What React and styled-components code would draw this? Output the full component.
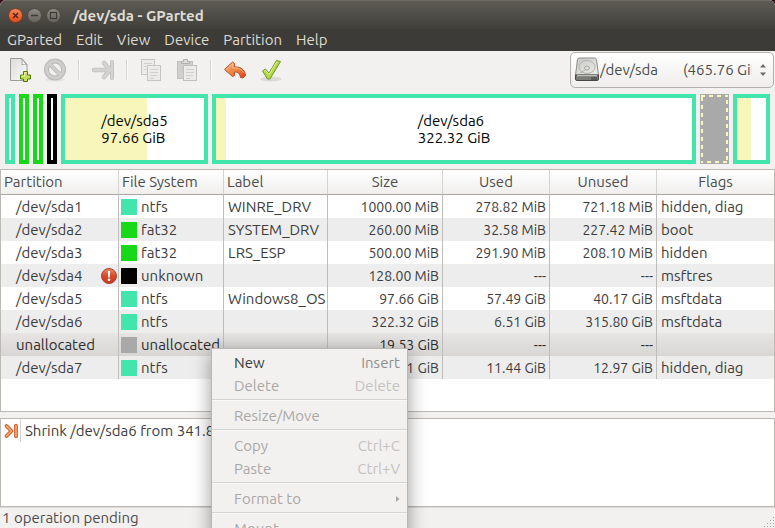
import React from "react";
import styled, { createGlobalStyle } from "styled-components";

const GlobalStyle = createGlobalStyle`
  * {
    box-sizing: border-box;
  }
  body {
    margin: 0;
    background: #300a18;
    color: #3c3c3c;
    font-family: Ubuntu, "Noto Sans", sans-serif;
    font-size: 15px;
  }
  button, select {
    font: inherit;
    color: inherit;
    border: none;
    background: none;
    margin: 0;
    padding: 0;
  }
`;

const colors = {
  ntfs: "#42e5ac",
  fat32: "#18d918",
  unknown: "#000000",
  unallocated: "#a9a9a9",
  used: "#f8f6ba",
};

const Window = styled.div`
  position: relative;
  display: flex;
  flex-direction: column;
  height: 100vh;
  overflow: hidden;
  background: #f2f1f0;
  border-radius: 6px 6px 0 0;
`;

const TitleBar = styled.header`
  display: flex;
  align-items: center;
  gap: 4px;
  height: 29px;
  flex-shrink: 0;
  padding: 0 8px;
  background: linear-gradient(#5d5b54, #403f3a);
  border-top: 1px solid #6b6961;
`;

const Title = styled.h1`
  margin: 0 0 0 8px;
  font-size: 15px;
  font-weight: 700;
  color: #dfdbd2;
`;

const WindowButton = styled.button`
  display: flex;
  width: 15px;
  height: 15px;
`;

const MenuBar = styled.nav`
  display: flex;
  gap: 14px;
  height: 22px;
  flex-shrink: 0;
  padding: 0 7px 2px;
  background: #3c3b37;
  color: #dfdbd2;
`;

const Toolbar = styled.div`
  display: flex;
  align-items: center;
  height: 38px;
  flex-shrink: 0;
  padding: 0 1px;
`;

const ToolButton = styled.button`
  display: flex;
  align-items: center;
  justify-content: center;
  width: 36px;
  height: 36px;
`;

const ToolSeparator = styled.span`
  width: 2px;
  height: 20px;
  margin: 0 5px;
  border-left: 1px solid #d6d4d2;
  background: #fbfbfa;
`;

const DeviceBox = styled.label`
  display: flex;
  align-items: center;
  width: 204px;
  height: 36px;
  margin-left: auto;
  padding: 0 6px 0 3px;
  border: 1px solid #b4b1ac;
  border-radius: 5px;
  background: linear-gradient(#ffffff, #eeedeb);
  color: #4c4c4c;
`;

const DeviceSelect = styled.select`
  flex: 1;
  min-width: 0;
  height: 22px;
  margin: 0 7px 2px 0;
  appearance: none;
  overflow: hidden;
  text-overflow: clip;
`;

const DiskMap = styled.div`
  display: flex;
  gap: 4px;
  height: 70px;
  flex-shrink: 0;
  margin: 5px;
`;

const Block = styled.div`
  flex: ${({ $size }) => `${$size} 1 ${$size}px`};
  min-width: 0;
  display: flex;
  align-items: center;
  justify-content: center;
  border: 4px solid ${({ $color }) => $color};
  background: linear-gradient(
    to right,
    ${colors.used} ${({ $used }) => $used}%,
    #ffffff ${({ $used }) => $used}%
  );
  background-origin: padding-box;
  color: #000000;
  line-height: 17px;
  white-space: pre-line;
`;

const FreeBlock = styled.div`
  flex: ${({ $size }) => `${$size} 1 ${$size}px`};
  padding: 1px;
  background: ${colors.unallocated};
`;

const Dashes = styled.svg`
  display: block;
  width: 100%;
  height: 100%;
`;

const Panel = styled.section`
  flex: ${({ $grow }) => ($grow ? 1 : "none")};
  min-height: ${({ $grow }) => ($grow ? "0" : "89px")};
  margin-bottom: ${({ $grow }) => ($grow ? "6px" : "0")};
  overflow: hidden;
  border: 1px solid #bdbab5;
  background: #ffffff;
`;

const Table = styled.table`
  width: 100%;
  table-layout: fixed;
  border-collapse: separate;
  border-spacing: 0;
  line-height: 20px;
`;

const HeadCell = styled.th`
  width: ${({ $width }) => $width};
  height: 25px;
  padding: 0 3px;
  text-align: ${({ $align }) => $align || "left"};
  font-weight: 400;
  color: #4c4c4c;
  background: linear-gradient(#ffffff, #f0efee);
  border-right: 1px solid #d6d4d2;
  border-bottom: 1px solid #a9a6a2;
  &:last-child {
    border-right: none;
  }
`;

const Row = styled.tr`
  background: ${({ $selected }) =>
    $selected ? "linear-gradient(#e6e5e4, #d8d6d4)" : "#ffffff"};
  color: ${({ $selected }) => ($selected ? "#2c2c2c" : "#3c3c3c")};
  &:nth-child(even) {
    background: #ededed;
  }
`;

const Cell = styled.td`
  height: 23px;
  padding: 0 3px 0 4px;
  white-space: nowrap;
  border-right: 1px solid #bfbdba;
  &:last-child {
    border-right: none;
  }
`;

const NumberCell = styled(Cell)`
  font-size: 14px;
  text-align: right;
`;

const NameLine = styled.div`
  display: flex;
  align-items: center;
  justify-content: space-between;
  height: 20px;
  padding-left: 11px;
  margin-right: -2px;
`;

const FsLine = styled.div`
  display: flex;
  align-items: center;
  gap: 4px;
  height: 20px;
  margin-left: -2px;
`;

const Swatch = styled.span`
  width: 16px;
  height: 16px;
  flex-shrink: 0;
  background: ${({ $color }) => $color};
`;

const Operation = styled.div`
  display: flex;
  align-items: center;
  height: 23px;
  white-space: nowrap;
`;

const OperationIcon = styled.span`
  display: flex;
  align-items: center;
  align-self: stretch;
  width: 20px;
  margin-right: 4px;
  padding-left: 2px;
  border-right: 1px solid #d6d4d2;
`;

const StatusBar = styled.footer`
  display: flex;
  align-items: flex-start;
  justify-content: space-between;
  height: 21px;
  flex-shrink: 0;
  padding-left: 2px;
  border-top: 1px solid #dcdad8;
  color: #4c4c4c;
  line-height: 20px;
`;

const Grip = styled.svg`
  align-self: flex-end;
`;

const ContextMenu = styled.div`
  position: absolute;
  left: 211px;
  top: 348px;
  width: 197px;
  padding: 2px 0;
  border: 1px solid #bab7b3;
  background: #f2f1f0;
  box-shadow: 0 5px 18px rgba(0, 0, 0, 0.4);
`;

const MenuItem = styled.button`
  display: flex;
  align-items: center;
  justify-content: space-between;
  width: 100%;
  height: 23px;
  padding: 0 7px 0 22px;
  color: #3c3c3c;
  &:disabled {
    color: #aaa8a5;
  }
`;

const Shortcut = styled.span`
  color: #8e8e8c;
  ${MenuItem}:disabled & {
    color: #c4c2bf;
  }
`;

const MenuLine = styled.hr`
  height: 2px;
  margin: 2px 0 3px;
  border: none;
  border-top: 1px solid #d6d4d2;
  background: #fafafa;
`;

const partitions = [
  { name: "/dev/sda1", fs: "ntfs", label: "WINRE_DRV", size: "1000.00 MiB", used: "278.82 MiB", unused: "721.18 MiB", flags: "hidden, diag" },
  { name: "/dev/sda2", fs: "fat32", label: "SYSTEM_DRV", size: "260.00 MiB", used: "32.58 MiB", unused: "227.42 MiB", flags: "boot" },
  { name: "/dev/sda3", fs: "fat32", label: "LRS_ESP", size: "500.00 MiB", used: "291.90 MiB", unused: "208.10 MiB", flags: "hidden" },
  { name: "/dev/sda4", fs: "unknown", label: "", size: "128.00 MiB", used: "---", unused: "---", flags: "msftres", warning: true },
  { name: "/dev/sda5", fs: "ntfs", label: "Windows8_OS", size: "97.66 GiB", used: "57.49 GiB", unused: "40.17 GiB", flags: "msftdata" },
  { name: "/dev/sda6", fs: "ntfs", label: "", size: "322.32 GiB", used: "6.51 GiB", unused: "315.80 GiB", flags: "msftdata" },
  { name: "unallocated", fs: "unallocated", label: "", size: "19.53 GiB", used: "---", unused: "---", flags: "", selected: true },
  { name: "/dev/sda7", fs: "ntfs", label: "", size: "24.41 GiB", used: "11.44 GiB", unused: "12.97 GiB", flags: "hidden, diag" },
];

const blocks = [
  { name: "sda1", size: 10, fs: "ntfs", used: 28 },
  { name: "sda2", size: 10, fs: "fat32", used: 13 },
  { name: "sda3", size: 10, fs: "fat32", used: 58 },
  { name: "sda4", size: 10, fs: "unknown", used: 0 },
  { name: "sda5", size: 147, fs: "ntfs", used: 59, text: "/dev/sda5\n97.66 GiB" },
  { name: "sda6", size: 484, fs: "ntfs", used: 2, text: "/dev/sda6\n322.32 GiB" },
  { name: "free", size: 29, free: true },
  { name: "sda7", size: 37, fs: "ntfs", used: 48 },
];

const columns = [
  { title: "Partition", width: "118px" },
  { title: "File System", width: "105px" },
  { title: "Label", width: "104px" },
  { title: "Size", width: "115px", align: "center" },
  { title: "Used", width: "107px", align: "center" },
  { title: "Unused", width: "107px", align: "center" },
  { title: "Flags", width: "auto", align: "center" },
];

const menuItems = [
  { text: "New", shortcut: "Insert", enabled: true },
  { text: "Delete", shortcut: "Delete" },
  null,
  { text: "Resize/Move" },
  null,
  { text: "Copy", shortcut: "Ctrl+C" },
  { text: "Paste", shortcut: "Ctrl+V" },
  null,
  { text: "Format to", submenu: true },
  null,
  { text: "Mount" },
];

function WindowIcon({ kind }) {
  const close = kind === "close";
  return (
    <svg width="15" height="15" viewBox="0 0 15 15" fill="none">
      <defs>
        <linearGradient id={`wb-${kind}`} x1="0" y1="0" x2="0" y2="1">
          <stop offset="0" stopColor={close ? "#f58a60" : "#8d8b84"} />
          <stop offset="1" stopColor={close ? "#df4a16" : "#65635c"} />
        </linearGradient>
      </defs>
      <circle cx="7.5" cy="7.5" r="7" fill={`url(#wb-${kind})`} stroke={close ? "#7e3a20" : "#4a4943"} />
      {close && <path d="M5 5l5 5M10 5l-5 5" stroke="#4b2010" strokeWidth="1.3" />}
      {kind === "minimize" && <path d="M4 7.5h7" stroke="#3c3b37" strokeWidth="1.3" />}
      {kind === "maximize" && <rect x="4.5" y="4.5" width="6" height="6" stroke="#3c3b37" strokeWidth="1.2" />}
    </svg>
  );
}

function NewIcon() {
  return (
    <svg width="24" height="24" viewBox="0 0 24 24" fill="none">
      <defs>
        <linearGradient id="page" x1="0" y1="0" x2="1" y2="1">
          <stop offset="0" stopColor="#dcdcda" />
          <stop offset="1" stopColor="#fafafa" />
        </linearGradient>
      </defs>
      <path d="M3.500.5h11.500l5 6v16h-16.500z" fill="url(#page)" stroke="#9b9b98" />
      <path d="M14.500.7c1 2 .8 4 .2 6 2-.5 3.500-.5 5 .2z" fill="#ffffff" stroke="#a8a8a5" />
      <path d="M16.500 13.500h4v3.500h3v4h-3v2.500h-4v-2.500h-3v-4h3z" fill="#c5de58" stroke="#4e7a08" />
      <path d="M17.500 14.500h2M14.500 18h3v-3" stroke="#e9f3ae" />
    </svg>
  );
}

function ForbiddenIcon() {
  return (
    <svg width="24" height="24" viewBox="0 0 24 24" fill="none">
      <ellipse cx="12" cy="21.500" rx="10" ry="2" fill="#e4e3e1" />
      <circle cx="12" cy="11.500" r="8.500" stroke="#b9b8b6" strokeWidth="5" />
      <path d="M6.500 6l11 11" stroke="#b9b8b6" strokeWidth="4" />
      <circle cx="12" cy="11.500" r="8.500" stroke="#cfcecc" strokeWidth="3" />
      <path d="M6 5.500l12 12" stroke="#cfcecc" strokeWidth="2.500" />
    </svg>
  );
}

function MoveIcon() {
  return (
    <svg width="24" height="24" viewBox="0 0 24 24" fill="none" strokeLinecap="round" strokeLinejoin="round">
      <g stroke="#c2c1bf" strokeWidth="4.500">
        <path d="M3 12h12M13 5l6 7-6 7" />
        <path d="M21 4v16" strokeWidth="4" />
      </g>
      <g stroke="#d4d3d1" strokeWidth="3">
        <path d="M3 12h12M13 5l6 7-6 7" />
        <path d="M21 4v16" strokeWidth="2.500" />
      </g>
    </svg>
  );
}

function CopyIcon() {
  return (
    <svg width="24" height="24" viewBox="0 0 24 24" fill="#ecebea" stroke="#c6c5c3">
      <rect x="2.500" y="1.500" width="13" height="15" />
      <path d="M5 5.500h8M5 8.500h8M5 11.500h4" stroke="#d2d1cf" />
      <rect x="8.500" y="7.500" width="13" height="15" />
      <path d="M11 11.500h8M11 14.500h8M11 17.500h7M11 20.500h4" stroke="#cfcecc" />
    </svg>
  );
}

function PasteIcon() {
  return (
    <svg width="24" height="24" viewBox="0 0 24 24" fill="#ecebea" stroke="#c0bfbd">
      <rect x="2.500" y="3.500" width="15" height="17" fill="#d0cfcd" />
      <path d="M6.500 5.500v-2h2v-2h4v2h2v2z" fill="#dddcda" stroke="#b0afad" />
      <rect x="8.500" y="7.500" width="13" height="15" />
      <path d="M11 11.500h8M11 14.500h8M11 17.500h7M11 20.500h4" stroke="#cfcecc" />
    </svg>
  );
}

function UndoIcon() {
  return (
    <svg width="24" height="24" viewBox="0 0 24 24" fill="none">
      <defs>
        <linearGradient id="undo" x1="0" y1="0" x2="1" y2="1">
          <stop offset="0" stopColor="#f8b878" />
          <stop offset=".6" stopColor="#ea7a3c" />
          <stop offset="1" stopColor="#dd3a1c" />
        </linearGradient>
      </defs>
      <path
        d="M1.500 11.500l8-7.500 2 1.500v3.500c6-.5 10.500 2.500 11 8.500l-2.500 2.500-2.500-.5c-.5-4-2.500-5.500-6-5.500v3.500l-2 1z"
        fill="url(#undo)"
        stroke="#b8532a"
        strokeLinejoin="round"
      />
      <path d="M3.500 11.500l6.500-6v4.500c5-.5 9 1 10.500 5" stroke="#fbd0a0" strokeOpacity=".7" />
    </svg>
  );
}

function ApplyIcon() {
  return (
    <svg width="24" height="24" viewBox="0 0 24 24" fill="none" strokeLinejoin="round">
      <ellipse cx="12" cy="21" rx="10.500" ry="2.500" fill="#dbdad7" />
      <path d="M3.500 13l3-2 3.500 4 7.500-12.500 4 1-10.500 17.500h-2.500z" fill="#b3d84c" stroke="#6f9a20" />
      <path d="M5 13.300l1.500-1 3.500 4.200 8-13" stroke="#e3f0a0" />
    </svg>
  );
}

function DiskIcon() {
  return (
    <svg width="26" height="26" viewBox="0 0 26 26" fill="none">
      <defs>
        <linearGradient id="disk" x1="0" y1="0" x2="1" y2="1">
          <stop offset="0" stopColor="#c7c7c3" />
          <stop offset="1" stopColor="#eeeeec" />
        </linearGradient>
      </defs>
      <path d="M1.500 18l2-15.500q.3-1.500 2-1.500h15q1.700 0 2 1.500l2 15.500z" fill="url(#disk)" stroke="#8d8d89" />
      <path d="M1.500 18h23v4q0 1.500-1.500 1.500h-20q-1.500 0-1.500-1.500z" fill="#7b7b77" stroke="#464643" />
      <path d="M3 18.700h20" stroke="#d3d3cf" />
      <path d="M18 20v3M20 20v3M22 20v3" stroke="#3a3a38" />
      <ellipse cx="13" cy="10" rx="8" ry="6.500" stroke="#b0b0ac" />
      <ellipse cx="13" cy="11" rx="2.500" ry="2" fill="#dededb" stroke="#a5a5a1" />
      <path d="M6 16l5-3" stroke="#b0b0ac" />
    </svg>
  );
}

function WarningIcon() {
  return (
    <svg width="16" height="16" viewBox="0 0 16 16">
      <defs>
        <linearGradient id="warn" x1="0" y1="0" x2="0" y2="1">
          <stop offset="0" stopColor="#ec8a62" />
          <stop offset=".5" stopColor="#d9482c" />
          <stop offset="1" stopColor="#c83a26" />
        </linearGradient>
      </defs>
      <circle cx="8" cy="8" r="7.500" fill="url(#warn)" stroke="#a8402a" />
      <path d="M6.800 3h2.400l-.4 6.500h-1.600z" fill="#ffffff" />
      <circle cx="8" cy="11.800" r="1.300" fill="#ffffff" />
    </svg>
  );
}

function ResizeIcon() {
  return (
    <svg width="16" height="16" viewBox="0 0 16 16" fill="none" strokeLinecap="round" strokeLinejoin="round">
      <path d="M3.500 3l5 5-5 5M13 2.500v11" stroke="#c9481c" strokeWidth="3.600" />
      <path d="M3.500 3l5 5-5 5M13 2.500v11" stroke="#f6a868" strokeWidth="1.800" />
    </svg>
  );
}

function PartitionRow({ item }) {
  return (
    <Row $selected={item.selected}>
      <Cell>
        <NameLine>
          {item.name}
          {item.warning && <WarningIcon />}
        </NameLine>
      </Cell>
      <Cell>
        <FsLine>
          <Swatch $color={colors[item.fs]} />
          {item.fs}
        </FsLine>
      </Cell>
      <Cell>{item.label}</Cell>
      <NumberCell>{item.size}</NumberCell>
      <NumberCell>{item.used}</NumberCell>
      <NumberCell>{item.unused}</NumberCell>
      <Cell>{item.flags}</Cell>
    </Row>
  );
}

function App() {
  return (
    <Window>
      <GlobalStyle />
      <TitleBar>
        {["close", "minimize", "maximize"].map((kind) => (
          <WindowButton key={kind} aria-label={kind}>
            <WindowIcon kind={kind} />
          </WindowButton>
        ))}
        <Title>/dev/sda - GParted</Title>
      </TitleBar>
      <MenuBar>
        {["GParted", "Edit", "View", "Device", "Partition", "Help"].map((name) => (
          <button key={name}>{name}</button>
        ))}
      </MenuBar>
      <Toolbar>
        <ToolButton aria-label="New"><NewIcon /></ToolButton>
        <ToolButton aria-label="Delete" disabled><ForbiddenIcon /></ToolButton>
        <ToolSeparator />
        <ToolButton aria-label="Resize/Move" disabled><MoveIcon /></ToolButton>
        <ToolSeparator />
        <ToolButton aria-label="Copy" disabled><CopyIcon /></ToolButton>
        <ToolButton aria-label="Paste" disabled><PasteIcon /></ToolButton>
        <ToolSeparator />
        <ToolButton aria-label="Undo"><UndoIcon /></ToolButton>
        <ToolButton aria-label="Apply"><ApplyIcon /></ToolButton>
        <DeviceBox>
          <DiskIcon />
          <DeviceSelect aria-label="Device">
            <option>{"/dev/sda\u2003\u2002\u2009(465.76 GiB)"}</option>
          </DeviceSelect>
          <svg width="8" height="14" viewBox="0 0 8 14" fill="#6a6a68">
            <path d="M1 4.500l3-3.500 3 3.500zM1 9.500l3 3.500 3-3.500z" />
          </svg>
        </DeviceBox>
      </Toolbar>
      <DiskMap>
        {blocks.map((b) =>
          b.free ? (
            <FreeBlock key={b.name} $size={b.size}>
              <Dashes>
                <rect width="100%" height="100%" fill="none" stroke={colors.used} strokeWidth="4" strokeDasharray="4 4" />
              </Dashes>
            </FreeBlock>
          ) : (
            <Block key={b.name} $size={b.size} $color={colors[b.fs]} $used={b.used}>
              {b.text}
            </Block>
          )
        )}
      </DiskMap>
      <Panel $grow>
        <Table>
          <thead>
            <tr>
              {columns.map((c) => (
                <HeadCell key={c.title} $width={c.width} $align={c.align}>
                  {c.title}
                </HeadCell>
              ))}
            </tr>
          </thead>
          <tbody>
            {partitions.map((item) => (
              <PartitionRow key={item.name} item={item} />
            ))}
          </tbody>
        </Table>
      </Panel>
      <Panel>
        <Operation>
          <OperationIcon><ResizeIcon /></OperationIcon>
          Shrink /dev/sda6 from 341.85 GiB to 322.32 GiB
        </Operation>
      </Panel>
      <StatusBar>
        1 operation pending
        <Grip width="12" height="12" viewBox="0 0 12 12" fill="#a3a19e">
          <path d="M10 1h1v1h-1zM7 4h1v1h-1zM10 4h1v1h-1zM4 7h1v1h-1zM7 7h1v1h-1zM10 7h1v1h-1zM1 10h1v1h-1zM4 10h1v1h-1zM7 10h1v1h-1zM10 10h1v1h-1z" />
        </Grip>
      </StatusBar>
      <ContextMenu>
        {menuItems.map((item, i) =>
          item ? (
            <MenuItem key={item.text} disabled={!item.enabled}>
              {item.text}
              {item.shortcut && <Shortcut>{item.shortcut}</Shortcut>}
              {item.submenu && (
                <svg width="4" height="8" viewBox="0 0 4 8" fill="#aaa8a5">
                  <path d="M0 1l3.500 3-3.500 3z" />
                </svg>
              )}
            </MenuItem>
          ) : (
            <MenuLine key={i} />
          )
        )}
      </ContextMenu>
    </Window>
  );
}

export default App;
